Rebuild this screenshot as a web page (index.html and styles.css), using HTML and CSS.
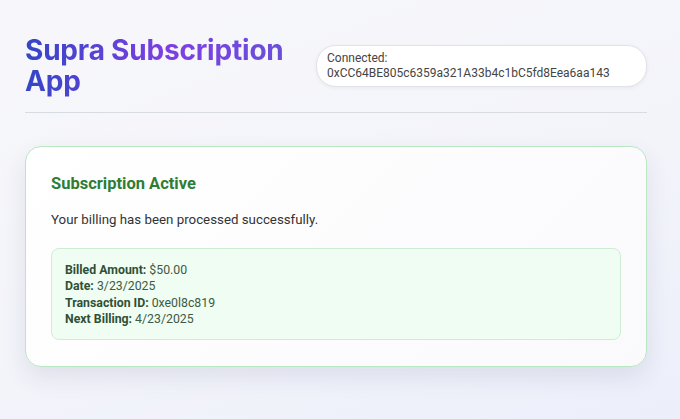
FILE: index.html
```html
<!DOCTYPE html>
<html lang="en">
<head>
  <meta charset="UTF-8">
  <title>Supra Subscription App</title>
  <link rel="stylesheet" href="styles.css">
</head>
<body>

  <div class="app">
    <!-- Cabecera -->
    <header class="header">
      <h1 class="title">Supra Subscription<br>App</h1>
      <div class="wallet">
        <div>Connected:</div>
        <div>0xCC64BE805c6359a321A33b4c1bC5fd8Eea6aa143</div>
      </div>
    </header>

    <!-- Estado -->
    <div class="card">
      <h2 class="card-title">Subscription Active</h2>
      <p class="card-text">Your billing has been processed successfully.</p>
      <div class="details">
        <div><b>Billed Amount:</b> $50.00</div>
        <div><b>Date:</b> 3/23/2025</div>
        <div><b>Transaction ID:</b> 0xe0l8c819</div>
        <div><b>Next Billing:</b> 4/23/2025</div>
      </div>
    </div>
  </div>

</body>
</html>
```

FILE: styles.css
```css
html, body {
    margin: 0;
    height: 100%;
}
body {
    font-family: Roboto, "Noto Sans", sans-serif;
    background: linear-gradient(160deg, #f7f7fb 0%, #f3f4fa 60%, #eceffa 100%);
    color: #333;
}
.app {
    padding: 35px 33px 0 25px;
}
.header {
    display: flex;
    align-items: center;
    justify-content: space-between;
    padding-bottom: 15px;
    border-bottom: 1px solid #d9dbe2;
}
.title {
    margin: 0;
    font-family: Inter, sans-serif;
    font-size: 28px;
    line-height: 31px;
    font-weight: 700;
    letter-spacing: -0.2px;
    background: linear-gradient(90deg, #3346c6 0%, #7d3fe2 55%, #6a4fd8 100%);
    -webkit-background-clip: text;
    background-clip: text;
    color: transparent;
}
.wallet {
    width: 309px;
    padding: 5px 10px;
    font-size: 12px;
    line-height: 15px;
    color: #444;
    background: #fff;
    border: 1px solid #e2e3e8;
    border-radius: 20px;
    box-shadow: 0 1px 4px rgba(0,0,0,0.06);
}
.card {
    margin-top: 33px;
    padding: 26px 25px 26px 25px;
    background: linear-gradient(135deg, #ffffff, #fafafd);
    border: 1px solid #b9e7c1;
    border-radius: 16px;
    box-shadow: 0 10px 24px rgba(40,50,90,0.10);
}
.card-title {
    margin: 0;
    font-size: 16.5px;
    line-height: 22px;
    font-weight: 700;
    color: #2e7d32;
}
.card-text {
    margin: 15px 0 18px;
    font-size: 13.3px;
    line-height: 20px;
    color: #333;
}
.details {
    padding: 13px 13px 12px;
    font-size: 12.3px;
    line-height: 16.3px;
    color: #3d5a45;
    background: #f0fdf3;
    border: 1px solid #cdeed4;
    border-radius: 8px;
}
.details b {
    color: #2f4f37;
}
```
